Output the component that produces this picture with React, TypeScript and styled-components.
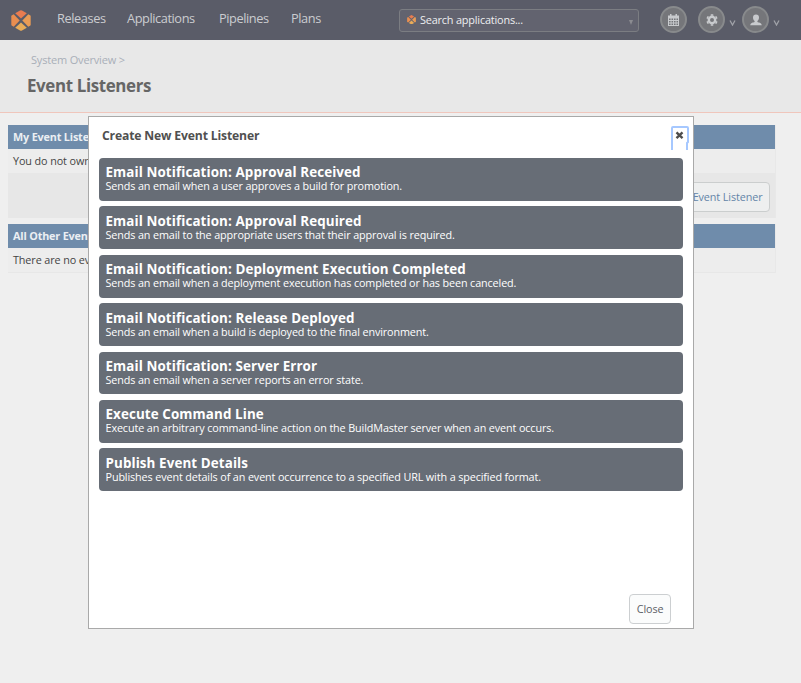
import React from 'react';
import styled, { createGlobalStyle } from 'styled-components';

const GlobalStyle = createGlobalStyle`
  * { box-sizing: border-box; }
  body {
    margin: 0;
    background: #efefef;
    font-family: "Open Sans", "Noto Sans", sans-serif;
    font-size: 10.8px;
    letter-spacing: -0.1px;
    color: #444;
  }
  button { font: inherit; letter-spacing: inherit; }
`;

const Page = styled.div`
  position: relative;
  height: 683px;
  overflow: hidden;
  white-space: nowrap;
`;

const TopBar = styled.header`
  height: 40px;
  background: #5a5c68;
  display: flex;
  align-items: flex-start;
  padding-left: 11px;
`;

const Logo = styled.svg<{ $size: number }>`
  width: ${p => p.$size}px;
  height: ${p => p.$size * 1.05}px;
  flex: none;
`;

const LogoSlot = styled.div`
  width: 46px;
  padding-top: 9.5px;
  line-height: 0;
`;

const Nav = styled.nav`
  display: flex;
  width: 342px;
`;

const NavLink = styled.a<{ $width: number }>`
  width: ${p => p.$width}px;
  font-size: 12.8px;
  letter-spacing: -0.43px;
  line-height: 18px;
  padding-top: 9px;
  color: #cbccd0;
`;

const Search = styled.div`
  width: 240px;
  height: 23px;
  margin-top: 9px;
  padding: 0 5px 2px 7px;
  display: flex;
  align-items: center;
  border: 1px solid #7b7d82;
  border-radius: 3px;
  background: #62636f;
  color: #eeeff1;
  font-size: 10.9px;
  letter-spacing: -0.19px;
`;

const SearchText = styled.span`
  flex: 1;
  padding-left: 4px;
  line-height: 15px;
`;

const SearchArrow = styled.i`
  border: 2.5px solid transparent;
  border-top: 5px solid #8b8c91;
  border-bottom: 0;
  margin-top: 5px;
`;

const Tools = styled.div`
  display: flex;
  padding: 6px 0 0 21px;
`;

const Tool = styled.div<{ $width: number }>`
  width: ${p => p.$width}px;
  display: flex;
  align-items: center;
`;

const RoundButton = styled.span`
  width: 27px;
  height: 27px;
  flex: none;
  display: flex;
  align-items: center;
  justify-content: center;
  border: 2px solid #888a8c;
  border-radius: 50%;
  background: #75767a;
  color: #c8cacd;
`;

const Caret = styled.svg`
  width: 7px;
  height: 6px;
  margin: 6px 0 0 3.5px;
`;

const PageHead = styled.section`
  height: 73px;
  background: #e8e8e8;
  border-bottom: 1px solid #f0c6bc;
  padding: 12px 0 0 27px;
`;

const Breadcrumb = styled.div`
  padding-left: 4px;
  font-size: 11px;
  letter-spacing: -0.17px;
  line-height: 16px;
  color: #a8afb8;
`;

const PageTitle = styled.h1`
  margin: 5px 0 0;
  font-size: 16.9px;
  line-height: 26px;
  letter-spacing: -0.36px;
  color: #666;
`;

const Main = styled.main`
  padding: 12px 0 0 8px;
  width: 776px;
  display: grid;
  gap: 6px;
`;

const Panel = styled.section`
  border-right: 1px solid #e8e8e8;
  background: #ededed;
`;

const PanelHead = styled.h2`
  margin: 0;
  height: 24px;
  padding-left: 5px;
  background: #6f8cab;
  color: #ebeff3;
  font-size: 10.8px;
  letter-spacing: -0.16px;
  line-height: 24px;
`;

const PanelRow = styled.div`
  height: 25px;
  padding-left: 5px;
  line-height: 24px;
  border-bottom: 1px solid #e7e7e7;
`;

const PanelFoot = styled.div`
  height: 44px;
  display: flex;
  justify-content: flex-end;
  padding: 8px 5px 0;
  background: #e7e7e7;
`;

const Button = styled.button<{ $dim?: boolean }>`
  height: 30px;
  padding: 0 6.5px 2px;
  border: 1px solid ${p => (p.$dim ? '#cbcece' : '#cccfd1')};
  border-radius: 4px;
  background: ${p => (p.$dim ? '#eeefef' : '#fbfcfc')};
  color: ${p => (p.$dim ? '#6385a8' : '#5c6066')};
`;

const Dialog = styled.div`
  position: absolute;
  left: 88px;
  top: 116px;
  width: 606px;
  height: 513px;
  border: 1px solid #a9a9a9;
  background: #fff;
  display: flex;
  flex-direction: column;
  padding: 0 10px 4px;
`;

const DialogHead = styled.div`
  height: 41px;
  display: flex;
  justify-content: space-between;
  padding: 9px 0 0 3px;
`;

const DialogTitle = styled.h3`
  margin: 1px 0 0;
  font-size: 12.2px;
  line-height: 18px;
  letter-spacing: -0.17px;
  color: #505050;
`;

const CloseIcon = styled.svg`
  width: 18px;
  height: 24px;
  margin-right: -6px;
`;

const Choices = styled.div`
  display: grid;
  grid-auto-rows: 42.85px;
  gap: 5.55px;
`;

const Choice = styled.div`
  background: #676d76;
  color: #fff;
  border-radius: 4px;
  padding: 7.4px 6.5px 0;
`;

const ChoiceTitle = styled.div`
  font-size: 13.4px;
  font-weight: 700;
  line-height: 15px;
  letter-spacing: 0.1px;
`;

const ChoiceText = styled.div`
  margin-top: -1px;
  font-size: 10.8px;
  line-height: 13px;
  letter-spacing: -0.12px;
`;

const DialogFoot = styled.div`
  margin-top: auto;
  padding-right: 12px;
  display: flex;
  justify-content: flex-end;
`;

const Hex = ({ size }: { size: number }) => (
  <Logo $size={size} viewBox="0 0 20 21">
    <path fill="#e97c50" d="M4.2 3.2 9 .4Q10 0 11 .4l4.800 2.800L10 8.600Z" />
    <path fill="#e9ac59" d="m4.200 17.800 4.800 2.800q1 .4 2 0l4.800-2.800L10 12.400Z" />
    <path fill="#e98e50" d="M2.700 4.200.6 5.400Q.3 5.700.3 6.200v8.600q0 .5.4.8l2 1.200 6-6.300Z" />
    <path fill="#ea9c55" d="m17.300 4.200 2.100 1.200q.3.300.3.800v8.600q0 .5-.4.800l-2 1.200-6-6.300Z" />
  </Logo>
);

const DownMark = () => (
  <Caret viewBox="0 0 7 6">
    <path d="M1 .5 3.500 5 6 .5" fill="none" stroke="#a0a2a8" strokeWidth="1.300" />
  </Caret>
);

const navItems: [string, number][] = [['Releases', 70], ['Applications', 92], ['Pipelines', 72], ['Plans', 60]];

const choices = [
  ['Email Notification: Approval Received', 'Sends an email when a user approves a build for promotion.'],
  ['Email Notification: Approval Required', 'Sends an email to the appropriate users that their approval is required.'],
  ['Email Notification: Deployment Execution Completed', 'Sends an email when a deployment execution has completed or has been canceled.'],
  ['Email Notification: Release Deployed', 'Sends an email when a build is deployed to the final environment.'],
  ['Email Notification: Server Error', 'Sends an email when a server reports an error state.'],
  ['Execute Command Line', 'Execute an arbitrary command-line action on the BuildMaster server when an event occurs.'],
  ['Publish Event Details', 'Publishes event details of an event occurrence to a specified URL with a specified format.'],
];

export default function App() {
  return (
    <Page>
      <GlobalStyle />
      <TopBar>
        <LogoSlot><Hex size={20} /></LogoSlot>
        <Nav>{navItems.map(([label, width]) => <NavLink key={label} $width={width}>{label}</NavLink>)}</Nav>
        <Search>
          <Hex size={9} />
          <SearchText>Search applications...</SearchText>
          <SearchArrow />
        </Search>
        <Tools>
          <Tool $width={38}>
            <RoundButton>
              <svg width="11" height="12" viewBox="0 0 11 12">
                <path fill="currentColor" fillRule="evenodd" d="M0 1.500h2V0h1.500v1.500h4V0H9v1.500h2V12H0ZM1 4.500v1.600h1.600V4.500Zm2.500 0v1.600h1.600V4.500Zm2.500 0v1.600h1.600V4.500Zm2.500 0v1.600H10V4.500ZM1 7v1.600h1.600V7Zm2.500 0v1.600h1.600V7ZM6 7v1.600h1.600V7Zm2.500 0v1.600H10V7ZM1 9.500V11h1.600V9.500Zm2.500 0V11h1.600V9.500Zm2.500 0V11h1.600V9.500Zm2.500 0V11H10V9.500Z" />
              </svg>
            </RoundButton>
          </Tool>
          <Tool $width={44}>
            <RoundButton>
              <svg width="12" height="12" viewBox="0 0 12 12" fill="none" stroke="currentColor">
                <circle cx="6" cy="6" r="3.200" strokeWidth="2.400" />
                <path strokeWidth="2.500" d="M6 .2v1.600M6 10.200v1.600M1 3.100l1.400.8M9.600 8.100l1.400.8M1 8.900l1.400-.8M9.600 3.900l1.400-.8" />
              </svg>
            </RoundButton>
            <DownMark />
          </Tool>
          <Tool $width={44}>
            <RoundButton>
              <svg width="12" height="12" viewBox="0 0 12 12" fill="currentColor">
                <path d="M6 .5c2 0 3 1.300 3 3.100C9 5.300 8.100 6.500 7.400 7v.9c1.500.5 4.100.8 4.400 3.300H.2C.5 8.700 3.100 8.400 4.600 7.900V7C3.900 6.500 3 5.300 3 3.600 3 1.800 4 .5 6 .5Z" />
              </svg>
            </RoundButton>
            <DownMark />
          </Tool>
        </Tools>
      </TopBar>
      <PageHead>
        <Breadcrumb>System Overview &gt;</Breadcrumb>
        <PageTitle>Event Listeners</PageTitle>
      </PageHead>
      <Main>
        <Panel>
          <PanelHead>My Event Listeners</PanelHead>
          <PanelRow>You do not own any event listeners.</PanelRow>
          <PanelFoot><Button $dim>Create Event Listener</Button></PanelFoot>
        </Panel>
        <Panel>
          <PanelHead>All Other Event Listeners</PanelHead>
          <PanelRow>There are no event listeners.</PanelRow>
        </Panel>
      </Main>
      <Dialog role="dialog">
        <DialogHead>
          <DialogTitle>Create New Event Listener</DialogTitle>
          <CloseIcon viewBox="0 0 18 24">
            <path fill="none" stroke="#a6c8ff" strokeWidth="2" d="M1 24V2q0-1 1-1h14q1 0 1 1v14l-1 1v7" />
            <path fill="none" stroke="#4d4d4d" strokeWidth="2.400" d="m5.500 6.300 6 5.800m0-5.800-6 5.800" />
          </CloseIcon>
        </DialogHead>
        <Choices>
          {choices.map(([title, text]) => (
            <Choice key={title}>
              <ChoiceTitle>{title}</ChoiceTitle>
              <ChoiceText>{text}</ChoiceText>
            </Choice>
          ))}
        </Choices>
        <DialogFoot><Button>Close</Button></DialogFoot>
      </Dialog>
    </Page>
  );
}
